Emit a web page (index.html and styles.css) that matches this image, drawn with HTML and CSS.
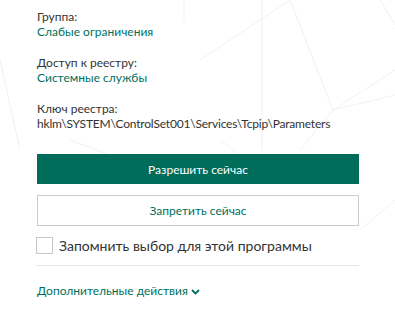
FILE: index.html
```html
<!DOCTYPE html>
<html lang="ru">
<head>
<meta charset="utf-8">
<link rel="stylesheet" href="styles.css">
</head>
<body>
<svg class="bg" width="395" height="311" viewBox="0 0 395 311" aria-hidden="true">
  <g stroke="#f1f1f1" stroke-width="1" fill="none">
    <line x1="290" y1="0" x2="333" y2="110"/>
    <line x1="290" y1="0" x2="200" y2="60"/>
    <line x1="262" y1="0" x2="262" y2="150"/>
    <line x1="395" y1="70" x2="333" y2="110"/>
    <line x1="333" y1="110" x2="395" y2="95"/>
    <line x1="333" y1="110" x2="300" y2="150"/>
    <line x1="380" y1="0" x2="395" y2="25"/>
    <line x1="184" y1="0" x2="184" y2="20"/>
    <line x1="0" y1="60" x2="20" y2="150"/>
    <line x1="395" y1="200" x2="360" y2="230"/>
    <line x1="70" y1="140" x2="110" y2="155"/>
    <line x1="220" y1="140" x2="240" y2="155"/>
  </g>
</svg>
<main class="panel">
  <div class="field">
    <div class="label">Группа:</div>
    <div class="value">Слабые ограничения</div>
  </div>
  <div class="field">
    <div class="label">Доступ к реестру:</div>
    <div class="value">Системные службы</div>
  </div>
  <div class="field">
    <div class="label">Ключ реестра:</div>
    <div class="label path">hklm\SYSTEM\ControlSet001\Services\Tcpip\Parameters</div>
  </div>
  <div class="actions">
    <button class="btn btn-primary">Разрешить сейчас</button>
    <button class="btn btn-secondary">Запретить сейчас</button>
    <label class="remember"><span class="box"></span><span>Запомнить выбор для этой программы</span></label>
  </div>
  <div class="divider"></div>
  <a class="more" href="#">Дополнительные действия<svg class="chev" width="9" height="6" viewBox="0 0 9 6"><path d="M1 1 L4.5 4.5 L8 1" stroke="#006d5b" stroke-width="1.8" fill="none"/></svg></a>
</main>
</body>
</html>
```
FILE: styles.css
```css
html, body {
  margin: 0;
  padding: 0;
  background: #ffffff;
}
body {
  width: 395px;
  height: 311px;
  overflow: hidden;
  position: relative;
  font-family: Lato, "Open Sans", sans-serif;
  color: #333333;
}
.bg {
  position: absolute;
  left: 0;
  top: 0;
  z-index: 0;
}
.panel {
  position: relative;
  z-index: 1;
  width: 322px;
  padding: 9px 0 0 37px;
  display: flex;
  flex-direction: column;
}
.field {
  display: flex;
  flex-direction: column;
  margin-bottom: 16px;
  font-size: 12px;
  line-height: 15px;
}
.label {
  color: #333333;
  white-space: nowrap;
}
.path {
  letter-spacing: -0.2px;
}
.value {
  color: #00705d;
}
.actions {
  margin-top: 7px;
  display: flex;
  flex-direction: column;
  gap: 11px;
}
.btn {
  width: 322px;
  height: 30px;
  font-family: inherit;
  font-size: 12px;
  border-radius: 0;
  cursor: pointer;
  padding: 0;
}
.btn-primary {
  background: #006d5b;
  color: #ffffff;
  border: none;
}
.btn-secondary {
  height: 31px;
  background: #ffffff;
  color: #00705d;
  border: 1px solid #cccccc;
}
.remember {
  display: flex;
  align-items: center;
  gap: 6px;
  font-size: 14px;
  line-height: 16px;
  color: #333333;
  margin-left: -1px;
}
.box {
  width: 15px;
  height: 15px;
  border: 1px solid #c8c8c8;
  background: #ffffff;
  flex: none;
}
.divider {
  margin-top: 11px;
  height: 1px;
  background: #e6e6e6;
  margin-left: -1px;
}
.more {
  margin-top: 17px;
  display: flex;
  align-items: center;
  gap: 3px;
  font-size: 12px;
  line-height: 15px;
  color: #00705d;
  text-decoration: none;
}
.chev {
  margin-top: 2px;
}
```
